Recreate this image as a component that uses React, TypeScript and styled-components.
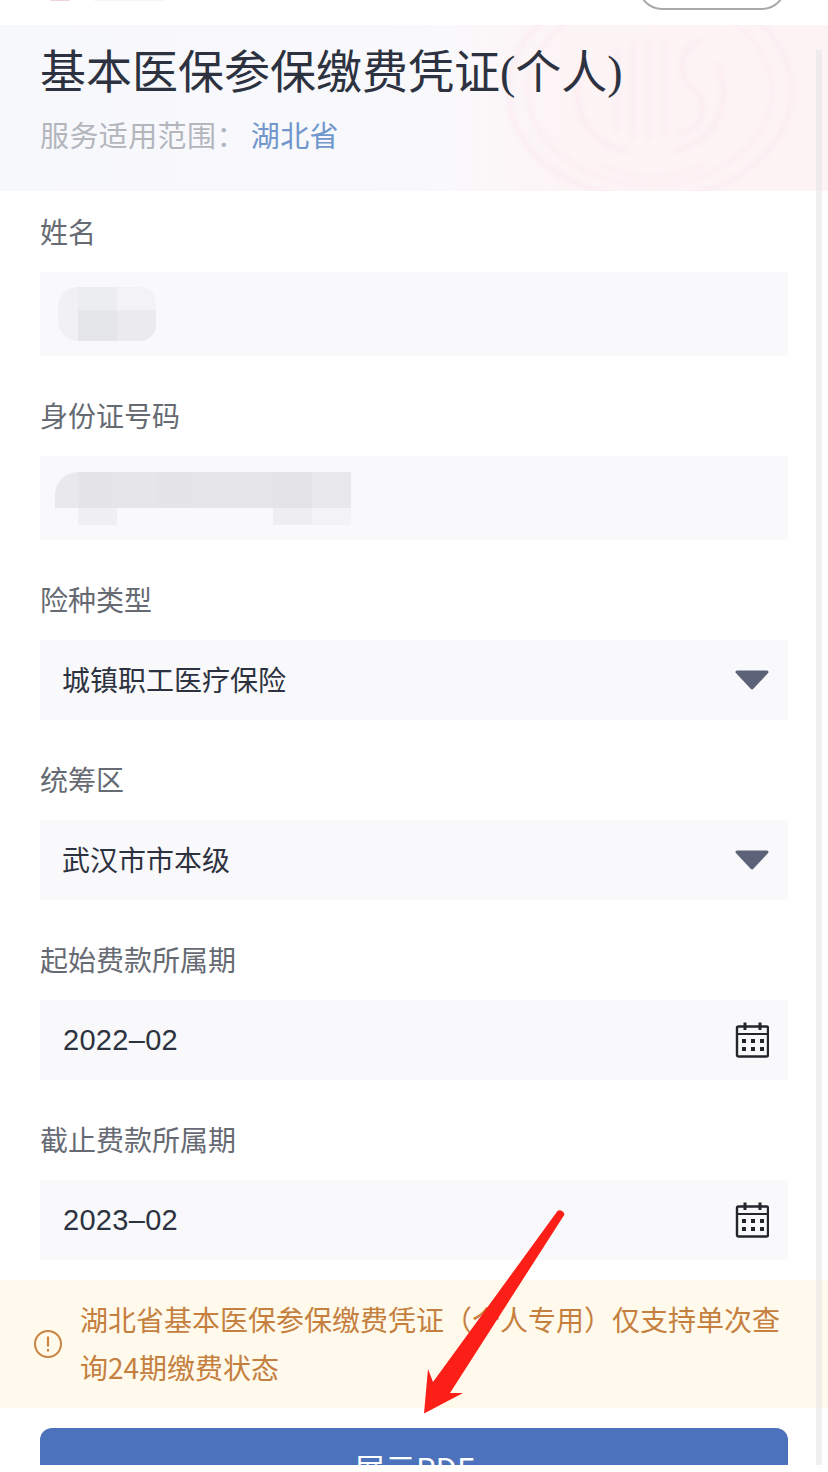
import { createGlobalStyle, styled } from "styled-components";

const GlobalStyle = createGlobalStyle`
  html, body {
    margin: 0;
    padding: 0;
    background: #fff;
  }
  body {
    font-family: "Noto Sans CJK SC", "Liberation Sans", sans-serif;
  }
`;

const Page = styled.div`
  position: relative;
  width: 828px;
  height: 1465px;
  overflow: hidden;
  background: #fff;
`;

const TopBar = styled.div`
  height: 25px;
  display: flex;
  align-items: flex-start;
  padding: 0 42px 0 50px;
  overflow: hidden;
`;

const TopLogo = styled.div`
  width: 20px;
  height: 1px;
  border-radius: 0 0 10px 10px;
  background: #f0d3d9;
`;

const TopName = styled.div`
  width: 70px;
  height: 1px;
  margin-left: 24px;
  background: #f6f6f6;
`;

const TopButton = styled.div`
  flex: none;
  width: 148px;
  height: 50px;
  margin: -40px 0 0 auto;
  box-sizing: border-box;
  border: 2px solid #aaa;
  border-radius: 24px;
`;

const Header = styled.header`
  position: relative;
  height: 166px;
  box-sizing: border-box;
  padding: 10px 40px 0;
  overflow: hidden;
  background: linear-gradient(90deg, #f7f8fc 0%, #f9f9fc 52%, #fdf4f6 68%, #fdf3f5 100%);
`;

const Seal = styled.svg`
  position: absolute;
  left: 505px;
  top: -12px;
  width: 290px;
  height: 190px;
  filter: blur(2px);
`;

const Title = styled.h1`
  position: relative;
  margin: 0;
  font-size: 46px;
  line-height: 66px;
  font-weight: 400;
  color: #2d3240;
`;

const Paren = styled.span`
  font-family: "Liberation Serif", serif;
`;

const Scope = styled.p`
  position: relative;
  margin: 6px 0 0;
  font-size: 29px;
  line-height: 44px;
  letter-spacing: 0.4px;
  color: #b3b6bd;
`;

const Province = styled.span`
  margin-left: 5px;
  color: #7096cc;
`;

const Form = styled.form`
  display: flex;
  flex-direction: column;
  gap: 40px;
  padding: 21px 40px 0;
`;

const Field = styled.div`
  display: flex;
  flex-direction: column;
  gap: 20px;
`;

const Label = styled.label`
  height: 40px;
  font-size: 28px;
  line-height: 38px;
  color: #666a73;
`;

const Input = styled.div<{ $tall?: boolean }>`
  height: ${(p) => (p.$tall ? "84px" : "80px")};
  box-sizing: border-box;
  display: flex;
  align-items: center;
  justify-content: space-between;
  padding: 0 19px 0 22px;
  border-radius: 4px;
  background: #f9f9fb;
  font-size: 28px;
  color: #2d3240;
`;

const Value = styled.span`
  margin-top: -2px;
`;

const DateText = styled.span`
  margin-left: 1px;
  font-family: "Liberation Sans", sans-serif;
  font-size: 29px;
  letter-spacing: 0.3px;
`;

const Mosaic = styled.div<{ $columns: string; $rows: string; $shift: string }>`
  display: grid;
  grid-template-columns: ${(p) => p.$columns};
  grid-template-rows: ${(p) => p.$rows};
  margin-left: ${(p) => p.$shift};
`;

const Cell = styled.div<{ $tone: string; $radius?: string }>`
  background: ${(p) => p.$tone};
  border-radius: ${(p) => p.$radius ?? "0"};
`;

const Notice = styled.div`
  display: flex;
  align-items: center;
  gap: 18px;
  height: 128px;
  box-sizing: border-box;
  margin-top: 20px;
  padding: 0 30px 0 34px;
  background: #fffaeb;
`;

const NoticeIcon = styled.svg`
  flex: none;
  width: 28px;
  height: 28px;
`;

const NoticeText = styled.p`
  margin: -2px 0 0;
  font-size: 28px;
  line-height: 48px;
  color: #c5803f;
`;

const Submit = styled.button`
  display: block;
  width: 748px;
  height: 80px;
  margin: 20px 40px 0;
  padding: 0;
  border: 0;
  border-radius: 12px 12px 0 0;
  background: #4c72bb;
  color: #fff;
  font-family: inherit;
  font-size: 31px;
  line-height: 80px;
`;

const Scrollbar = styled.div`
  position: absolute;
  top: 50px;
  right: 6px;
  bottom: 0;
  width: 6px;
  background: rgba(226, 226, 228, 0.5);
`;

const Arrow = styled.svg`
  position: absolute;
  left: 0;
  top: 0;
  width: 828px;
  height: 1465px;
  pointer-events: none;
`;

const Caret = () => (
  <svg width="34" height="20" viewBox="0 0 34 20">
    <path d="M2 2 H32 L17 18 Z" fill="#5c6378" stroke="#5c6378" strokeWidth="3" strokeLinejoin="round" />
  </svg>
);

const CalendarIcon = () => (
  <svg width="34" height="36" viewBox="0 0 34 36" fill="none" stroke="#22252b">
    <rect x="2" y="4.5" width="31" height="30" rx="1.5" strokeWidth="2.4" />
    <path d="M2 12 H33" strokeWidth="2" />
    <path d="M10 0.5 V8 M25 0.5 V8" strokeWidth="3" />
    <g fill="#22252b" stroke="none">
      {[7, 16, 25].map((x) =>
        [17, 25].map((y) => <rect key={`${x}-${y}`} x={x} y={y} width="4" height="4" />),
      )}
    </g>
  </svg>
);

const nameCells = [
  { tone: "#f1f1f3", radius: "20px 0 0 0" },
  { tone: "#ecedf0" },
  { tone: "#f3f3f6", radius: "0 16px 0 0" },
  { tone: "#f1f1f3", radius: "0 0 0 20px" },
  { tone: "#e5e6e9" },
  { tone: "#ebebee", radius: "0 0 16px 0" },
];

const idTopTones = ["#e9e9ec", "#e5e5e8", "#e6e6e9", "#e5e5e8", "#e6e6e9", "#e6e6e9", "#e4e4e7", "#e8e8eb"];
const idBottomTones = ["transparent", "#f0f0f3", "transparent", "transparent", "transparent", "transparent", "#eeeef1", "#f3f3f6"];

export default function App() {
  return (
    <Page>
      <GlobalStyle />
      <TopBar>
        <TopLogo />
        <TopName />
        <TopButton />
      </TopBar>
      <Header>
        <Seal viewBox="0 0 290 190" fill="none" stroke="#fcecf0" strokeWidth="3">
          <ellipse cx="145" cy="78" rx="142" ry="108" strokeWidth="4" />
          <ellipse cx="145" cy="78" rx="122" ry="94" />
          <path d="M78 50 C62 96 84 132 122 138 M212 50 C230 96 206 132 168 138" strokeWidth="5" />
          <path d="M112 36 V118 M128 28 V126 M144 28 V126 M160 28 V122" strokeWidth="4" />
          <path d="M196 28 C170 36 172 66 190 78 C204 90 200 116 172 122" strokeWidth="5" />
          <path d="M98 152 C130 168 166 168 198 152" />
        </Seal>
        <Title>
          基本医保参保缴费凭证<Paren>(</Paren>个人<Paren>)</Paren>
        </Title>
        <Scope>
          服务适用范围：<Province>湖北省</Province>
        </Scope>
      </Header>
      <Form>
        <Field>
          <Label>姓名</Label>
          <Input $tall>
            <Mosaic $columns="20px 39px 39px" $rows="23px 31px" $shift="-4px">
              {nameCells.map((c, i) => (
                <Cell key={i} $tone={c.tone} $radius={c.radius} />
              ))}
            </Mosaic>
          </Input>
        </Field>
        <Field>
          <Label>身份证号码</Label>
          <Input $tall>
            <Mosaic $columns="23px repeat(7, 39px)" $rows="36px 17px" $shift="-7px">
              {idTopTones.map((tone, i) => (
                <Cell key={i} $tone={tone} $radius={i === 0 ? "24px 0 0 0" : undefined} />
              ))}
              {idBottomTones.map((tone, i) => (
                <Cell key={i} $tone={tone} />
              ))}
            </Mosaic>
          </Input>
        </Field>
        <Field>
          <Label>险种类型</Label>
          <Input>
            <Value>城镇职工医疗保险</Value>
            <Caret />
          </Input>
        </Field>
        <Field>
          <Label>统筹区</Label>
          <Input>
            <Value>武汉市市本级</Value>
            <Caret />
          </Input>
        </Field>
        <Field>
          <Label>起始费款所属期</Label>
          <Input>
            <DateText>2022–02</DateText>
            <CalendarIcon />
          </Input>
        </Field>
        <Field>
          <Label>截止费款所属期</Label>
          <Input>
            <DateText>2023–02</DateText>
            <CalendarIcon />
          </Input>
        </Field>
      </Form>
      <Notice>
        <NoticeIcon viewBox="0 0 28 28" fill="none" stroke="#c98546">
          <circle cx="14" cy="14" r="13" strokeWidth="2" />
          <path d="M14 6.5 V16.5" strokeWidth="2.2" stroke="#d0823c" />
          <path d="M14 19 V21.5" strokeWidth="2.2" stroke="#d0823c" />
        </NoticeIcon>
        <NoticeText>湖北省基本医保参保缴费凭证（个人专用）仅支持单次查询24期缴费状态</NoticeText>
      </Notice>
      <Submit type="button">展示PDF</Submit>
      <Scrollbar />
      <Arrow viewBox="0 0 828 1465">
        <path
          d="M557.5 1211 C559 1209.5 563.5 1210.5 564.5 1214.5 L450 1393 L463 1393 L424 1413.5 L428 1369 L433 1382 Z"
          fill="#fb1f17"
        />
      </Arrow>
    </Page>
  );
}
